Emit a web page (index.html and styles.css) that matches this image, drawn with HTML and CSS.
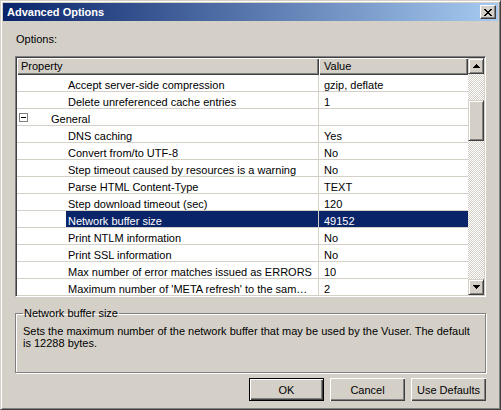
FILE: index.html
```html
<!DOCTYPE html>
<html lang="en">
<head>
    <meta charset="UTF-8">
    <title>Advanced Options</title>
    <link rel="stylesheet" href="styles.css">
</head>
<body>
    <div class="window">
        <div class="titlebar">
            <span class="title">Advanced Options</span>
            <div class="close">
                <svg width="8" height="7" viewBox="0 0 8 7" shape-rendering="crispEdges"><path d="M0 0h2v1H0zM6 0h2v1H6zM1 1h2v1H1zM5 1h2v1H5zM2 2h4v1H2zM3 3h2v1H3zM2 4h4v1H2zM1 5h2v1H1zM5 5h2v1H5zM0 6h2v1H0zM6 6h2v1H6z" fill="#000"/></svg>
            </div>
        </div>

        <div class="content">
            <div class="label">Options:</div>

            <!-- property grid -->
            <div class="grid">
                <div class="grid-main">
                    <div class="head">
                        <div class="hcell prop">Property</div>
                        <div class="hcell val">Value</div>
                    </div>
                    <div class="row">
                        <div class="cell prop"><span class="indent2"></span><span class="txt">Accept server-side compression</span></div>
                        <div class="cell val">gzip, deflate</div>
                    </div>
                    <div class="row">
                        <div class="cell prop"><span class="indent2"></span><span class="txt">Delete unreferenced cache entries</span></div>
                        <div class="cell val">1</div>
                    </div>
                    <div class="row">
                        <div class="cell prop"><span class="indent1"><span class="toggle"></span></span><span class="txt">General</span></div>
                        <div class="cell val"></div>
                    </div>
                    <div class="row">
                        <div class="cell prop"><span class="indent2"></span><span class="txt">DNS caching</span></div>
                        <div class="cell val">Yes</div>
                    </div>
                    <div class="row">
                        <div class="cell prop"><span class="indent2"></span><span class="txt">Convert from/to UTF-8</span></div>
                        <div class="cell val">No</div>
                    </div>
                    <div class="row">
                        <div class="cell prop"><span class="indent2"></span><span class="txt">Step timeout caused by resources is a warning</span></div>
                        <div class="cell val">No</div>
                    </div>
                    <div class="row">
                        <div class="cell prop"><span class="indent2"></span><span class="txt">Parse HTML Content-Type</span></div>
                        <div class="cell val">TEXT</div>
                    </div>
                    <div class="row">
                        <div class="cell prop"><span class="indent2"></span><span class="txt">Step download timeout (sec)</span></div>
                        <div class="cell val">120</div>
                    </div>
                    <div class="row selected">
                        <div class="cell prop"><span class="indent2"></span><span class="txt">Network buffer size</span></div>
                        <div class="cell val">49152</div>
                    </div>
                    <div class="row">
                        <div class="cell prop"><span class="indent2"></span><span class="txt">Print NTLM information</span></div>
                        <div class="cell val">No</div>
                    </div>
                    <div class="row">
                        <div class="cell prop"><span class="indent2"></span><span class="txt">Print SSL information</span></div>
                        <div class="cell val">No</div>
                    </div>
                    <div class="row">
                        <div class="cell prop"><span class="indent2"></span><span class="txt">Max number of error matches issued as ERRORS</span></div>
                        <div class="cell val">10</div>
                    </div>
                    <div class="row">
                        <div class="cell prop"><span class="indent2"></span><span class="txt">Maximum number of 'META refresh' to the sam…</span></div>
                        <div class="cell val">2</div>
                    </div>
                </div>
                <div class="vscroll">
                    <div class="sbtn">
                        <svg width="7" height="4" viewBox="0 0 7 4" shape-rendering="crispEdges"><path d="M3 0h1v1H3zM2 1h3v1H2zM1 2h5v1H1zM0 3h7v1H0z" fill="#000"/></svg>
                    </div>
                    <div class="track"><div class="thumb"></div></div>
                    <div class="sbtn">
                        <svg width="7" height="4" viewBox="0 0 7 4" shape-rendering="crispEdges"><path d="M0 0h7v1H0zM1 1h5v1H1zM2 2h3v1H2zM3 3h1v1H3z" fill="#000"/></svg>
                    </div>
                </div>
            </div>

            <fieldset class="desc">
                <legend>Network buffer size</legend>
                <p>Sets the maximum number of the network buffer that may be used by the Vuser. The default is 12288 bytes.</p>
            </fieldset>

            <div class="buttons">
                <button class="btn default">OK</button>
                <button class="btn">Cancel</button>
                <button class="btn">Use Defaults</button>
            </div>
        </div>
    </div>
</body>
</html>
```

FILE: styles.css
```css
* {
    box-sizing: border-box;
}

body {
    margin: 0;
    background: #d4d0c8;
    font: 11px "Liberation Sans", Arial, sans-serif;
    color: #000;
}

.window {
    width: 501px;
    height: 410px;
    background: #d4d0c8;
    border: 1px solid;
    border-color: #d4d0c8 #404040 #404040 #d4d0c8;
    box-shadow: inset 1px 1px #fff, inset -1px -1px #808080;
    padding: 2px;
    display: flex;
    flex-direction: column;
}

.titlebar {
    height: 18px;
    flex: none;
    background: linear-gradient(to right, #0a246a, #a6caf0);
    display: flex;
    align-items: center;
    justify-content: space-between;
    padding: 0 2px;
}

.title {
    color: #fff;
    font-weight: bold;
    padding-left: 2px;
}

.close {
    width: 16px;
    height: 14px;
    background: #d4d0c8;
    border: 1px solid;
    border-color: #fff #404040 #404040 #fff;
    box-shadow: inset -1px -1px #808080;
    display: flex;
    align-items: center;
    justify-content: center;
}

.content {
    flex: 1;
    padding: 12px 12px 0;
}

.label {
    line-height: 13px;
    padding-left: 1px;
    margin-bottom: 10px;
}

/* property grid */
.grid {
    height: 241px;
    display: flex;
    border: 1px solid;
    border-color: #808080 #fff #fff #808080;
    box-shadow: inset 1px 1px #404040, inset -1px -1px #d4d0c8;
    padding: 1px;
    background: #fff;
}

.grid-main {
    flex: 1;
    min-width: 0;
    display: flex;
    flex-direction: column;
    overflow: hidden;
}

.head {
    display: flex;
    flex: none;
    height: 17px;
}

.hcell {
    background: #d4d0c8;
    line-height: 17px;
    padding-left: 4px;
    box-shadow: inset 1px 1px #fff, inset -1px -1px #404040, inset -2px -2px #808080;
}

.hcell.prop {
    width: 302px;
}

.hcell.val {
    flex: 1;
    padding-left: 5px;
}

.row {
    display: flex;
    flex: none;
    height: 17px;
}

.cell {
    border-bottom: 1px solid #d4d0c8;
    padding-top: 2px;
    line-height: 15px;
    white-space: nowrap;
    overflow: hidden;
}

.cell.prop {
    width: 302px;
    display: flex;
    border-right: 1px solid #d4d0c8;
}

.cell.val {
    flex: 1;
    padding-left: 5px;
    padding-top: 3px;
}

.indent1 {
    width: 32px;
    flex: none;
    display: flex;
    align-items: center;
    padding-left: 2px;
    margin-top: -2px;
}

.indent2 {
    width: 49px;
    flex: none;
}

.toggle {
    width: 9px;
    height: 9px;
    border: 1px solid #808080;
    background: #fff;
    display: flex;
    align-items: center;
    justify-content: center;
}

.toggle::before {
    content: "";
    width: 5px;
    height: 1px;
    background: #000;
}

.txt {
    flex: 1;
    padding-left: 2px;
    padding-top: 1px;
    overflow: hidden;
}

.selected .cell.prop {
    padding-top: 0;
}

.selected .txt {
    padding-top: 3px;
}

.selected .txt,
.selected .cell.val {
    background: #0a246a;
    color: #fff;
}

/* scrollbar */
.vscroll {
    width: 16px;
    flex: none;
    display: flex;
    flex-direction: column;
}

.sbtn,
.thumb {
    background: #d4d0c8;
    border: 1px solid;
    border-color: #d4d0c8 #404040 #404040 #d4d0c8;
    box-shadow: inset 1px 1px #fff, inset -1px -1px #808080;
}

.sbtn {
    height: 16px;
    flex: none;
    display: flex;
    align-items: center;
    justify-content: center;
}

.track {
    flex: 1;
    background-color: #fff;
    background-image: conic-gradient(#d4d0c8 25%, #fff 0 50%, #d4d0c8 0 75%, #fff 0);
    background-size: 2px 2px;
}

.thumb {
    height: 41px;
    margin-top: 26px;
}

/* description group */
.desc {
    margin: 10px 0 0;
    padding: 0 7px;
    border: 1px solid #808080;
    box-shadow: inset 1px 1px #fff, 1px 1px #fff;
}

.desc legend {
    padding: 0 1px;
    line-height: 13px;
}

.desc p {
    margin: 0;
    padding-top: 5px;
    height: 52px;
    line-height: 12px;
}

/* buttons */
.buttons {
    display: flex;
    justify-content: flex-end;
    gap: 6px;
    margin-top: 5px;
}

.btn {
    width: 75px;
    height: 23px;
    background: #d4d0c8;
    font: inherit;
    color: #000;
    padding: 0;
    border: none;
    box-shadow: inset 1px 1px #fff, inset -1px -1px #404040, inset -2px -2px #808080;
}

.btn.default {
    border: 1px solid #000;
}
```
